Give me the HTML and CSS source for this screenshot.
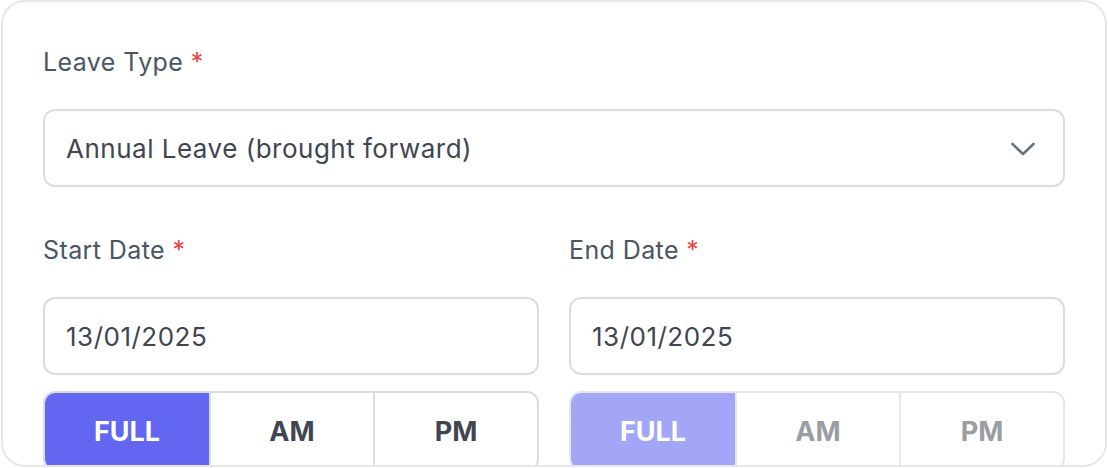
FILE: index.html
```html
<!DOCTYPE html>
<html lang="en">
<head>
<meta charset="utf-8">
<title>Leave Request</title>
<link rel="stylesheet" href="styles.css">
</head>
<body>
<div class="card">
  <div class="field">
    <label class="label">Leave Type <span class="req">*</span></label>
    <div class="select">
      <span class="select-text">Annual Leave (brought forward)</span>
      <svg class="chevron" width="26" height="16" viewBox="0 0 26 16" aria-hidden="true">
        <path d="M2.5 3 L13 13 L23.5 3" fill="none" stroke="#6b7280" stroke-width="2.6" stroke-linecap="round" stroke-linejoin="round"/>
      </svg>
    </div>
  </div>
  <div class="row">
    <div class="col">
      <label class="label">Start Date <span class="req">*</span></label>
      <div class="input">13/01/2025</div>
      <div class="seg">
        <div class="seg-btn active">FULL</div>
        <div class="seg-btn">AM</div>
        <div class="seg-btn">PM</div>
      </div>
    </div>
    <div class="col">
      <label class="label">End Date <span class="req">*</span></label>
      <div class="input">13/01/2025</div>
      <div class="seg disabled">
        <div class="seg-btn active">FULL</div>
        <div class="seg-btn">AM</div>
        <div class="seg-btn">PM</div>
      </div>
    </div>
  </div>
</div>
</body>
</html>
```

FILE: styles.css
```css
* { box-sizing: border-box; }
html, body { margin: 0; padding: 0; background: #ffffff; }
body {
  font-family: Inter, "Liberation Sans", sans-serif;
  width: 1108px;
  height: 468px;
  overflow: hidden;
}
.card {
  margin: 0 1px;
  width: 1106px;
  height: 467px;
  border: 2px solid #e5e7eb;
  border-radius: 24px;
  background: #fff;
  overflow: hidden;
  padding: 44px 40px 0 40px;
}
.label {
  display: block;
  font-size: 25px;
  letter-spacing: 0.4px;
  line-height: 32px;
  color: #4b5563;
  font-weight: 400;
}
.req { color: #ef4444; }
.field .label { margin-bottom: 31px; }
.select {
  height: 78px;
  border: 2px solid #d9dce1;
  border-radius: 12px;
  display: flex;
  align-items: center;
  justify-content: space-between;
  padding: 0 27px 0 21px;
}
.select-text, .input {
  font-size: 26px;
  letter-spacing: 0.5px;
  color: #3f4651;
}
.chevron { display: block; margin-top: 2px; }
.row {
  display: grid;
  grid-template-columns: 1fr 1fr;
  column-gap: 30px;
  margin-top: 47px;
}
.col .label { margin-bottom: 31px; }
.input {
  height: 78px;
  border: 2px solid #d9dce1;
  border-radius: 12px;
  display: flex;
  align-items: center;
  padding: 0 21px;
}
.seg {
  margin-top: 16px;
  height: 80px;
  display: grid;
  grid-template-columns: 1fr 1fr 1fr;
  border: 2px solid #d9dce1;
  border-radius: 12px;
  overflow: hidden;
}
.seg-btn {
  display: flex;
  align-items: center;
  justify-content: center;
  font-size: 27px;
  font-weight: 700;
  color: #3f4651;
  padding-bottom: 0;
  border-left: 2px solid #d9dce1;
}
.seg-btn:first-child { border-left: none; }
.seg-btn.active { background: #6366f1; color: #fff; }
.seg.disabled { border-color: #e5e7eb; }
.seg.disabled .seg-btn { color: #9a9da3; border-left-color: #e5e7eb; }
.seg.disabled .seg-btn:first-child { border-left: none; }
.seg.disabled .seg-btn.active { background: #a3a5f6; color: #fff; }
```
